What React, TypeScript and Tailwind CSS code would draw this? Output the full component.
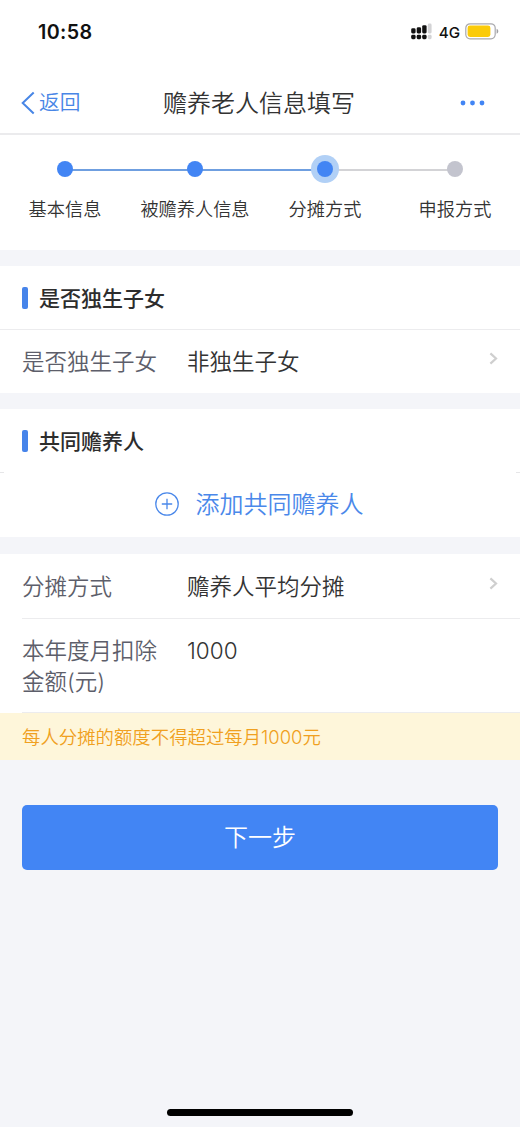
import React from 'react';

interface Step {
  label: string;
  status: 'done' | 'current' | 'todo';
}

const steps: Step[] = [
  { label: '基本信息', status: 'done' },
  { label: '被赡养人信息', status: 'done' },
  { label: '分摊方式', status: 'current' },
  { label: '申报方式', status: 'todo' },
];

const StatusBar: React.FC = () => (
  <div className="flex h-[62px] items-center justify-between pl-[38px] pr-[21px]">
    <span className="pt-[3px] text-[19.7px] font-semibold leading-none tracking-[0.4px] text-[#111]">
      10:58
    </span>
    <div className="flex items-center pt-px">
      <svg width="21" height="17" viewBox="0 0 21 17" fill="#111">
        <rect x="0.2" y="5.3" width="4.4" height="5.2" rx="1.4" />
        <rect x="5.7" y="4.3" width="4.4" height="6.2" rx="1.4" />
        <rect x="11.2" y="2.2" width="4.4" height="8.3" rx="1.4" />
        <rect x="16.8" y="0.5" width="3.8" height="10" rx="1.4" fill="#d3d3d5" />
        <rect x="0.2" y="11.8" width="4.4" height="4.4" rx="1.4" />
        <rect x="5.7" y="11.8" width="4.4" height="4.4" rx="1.4" />
        <rect x="11.2" y="11.8" width="4.4" height="4.4" rx="1.4" />
        <rect x="16.8" y="11.8" width="3.8" height="4.4" rx="1.4" fill="#d3d3d5" />
      </svg>
      <span className="ml-[7px] pt-0.5 text-[15.2px] font-medium leading-none text-[#111]">4G</span>
      <svg className="ml-[5px]" width="34" height="17" viewBox="0 0 34 17">
        <rect x="0.8" y="0.8" width="29.4" height="15" rx="4.2" fill="#fff" stroke="#a9a9ad" strokeWidth="1.2" />
        <rect x="2.6" y="2.6" width="22.8" height="11.4" rx="2.4" fill="#fbcb0a" />
        <path d="M31.6 5.8v5c1.2-.5 1.7-1.4 1.7-2.5s-.5-2-1.7-2.5z" fill="#a0a0a4" />
      </svg>
    </div>
  </div>
);

const NavBar: React.FC = () => (
  <div className="grid h-[73px] grid-cols-[1fr_auto_1fr] items-center border-b-2 border-[#ebebed] pl-[21px] pr-[23px] pt-[10px]">
    <button className="flex items-center text-[#4886e6]">
      <svg width="14" height="24" viewBox="0 0 14 24" fill="none" stroke="currentColor" strokeWidth="2">
        <path d="M12.7 1.5L1.7 12l11 10.5" />
      </svg>
      <span className="ml-1 pt-[2px] text-[20.7px] leading-none">返回</span>
    </button>
    <h1 className="pt-[3px] text-2xl leading-none">赡养老人信息填写</h1>
    <svg className="mr-3 justify-self-end" width="25" height="6" viewBox="0 0 25 6" fill="#4285f4">
      <circle cx="3" cy="3" r="2.4" />
      <circle cx="12.5" cy="3" r="2.4" />
      <circle cx="22" cy="3" r="2.4" />
    </svg>
  </div>
);

// Dots with the connecting line drawn from the previous step
const Stepper: React.FC = () => (
  <div className="grid h-[115px] grid-cols-4 pt-[19px]">
    {steps.map((step, i) => (
      <div key={step.label} className="relative flex flex-col items-center">
        {i > 0 && (
          <div
            className={`absolute right-1/2 top-[15px] h-[2px] w-full ${
              step.status === 'todo' ? 'bg-[#d3d3d6]' : 'bg-[#6f9fe0]'
            }`}
          />
        )}
        <div className="z-10 flex h-[30px] items-center">
          {step.status === 'current' ? (
            <div className="flex size-7 items-center justify-center rounded-full bg-[#b1d0f6]">
              <div className="size-[16.5px] rounded-full bg-[#4285f4]" />
            </div>
          ) : (
            <div
              className={`size-[16.5px] rounded-full ${step.status === 'done' ? 'bg-[#4285f4]' : 'bg-[#c3c4ce]'}`}
            />
          )}
        </div>
        <span className="mt-4 whitespace-nowrap text-[18.2px] leading-[18px]">{step.label}</span>
      </div>
    ))}
  </div>
);

const SectionTitle: React.FC<{ title: string }> = ({ title }) => (
  <div className="flex h-[63px] items-center px-[22px]">
    <div className="h-[22px] w-[6px] rounded-[2px] bg-[#4684ea]" />
    <h2 className="ml-[11px] pt-[2px] text-[21px] font-medium leading-none text-[#2d2d2d]">{title}</h2>
  </div>
);

const Chevron: React.FC = () => (
  <svg className="mb-2 ml-auto" width="9" height="13" viewBox="0 0 9 13" fill="none" stroke="#cfcfcf" strokeWidth="2.2">
    <path d="M1.4 1.4L7 6.5l-5.6 5.1" />
  </svg>
);

const SelectRow: React.FC<{ label: string; value: string }> = ({ label, value }) => (
  <button className="flex h-[63px] w-full items-center px-[22px] pt-[2px] text-[22.5px] leading-none">
    <span className="w-[165px] text-left text-[#5d5e6a]">{label}</span>
    <span>{value}</span>
    <Chevron />
  </button>
);

const App: React.FC = () => {
  return (
    <div className="flex min-h-[1127px] w-[520px] flex-col bg-[#f4f5f9] font-['Inter','Noto_Sans_CJK_SC',sans-serif] font-[350] text-[#333]">
      <header className="bg-white">
        <StatusBar />
        <NavBar />
        <Stepper />
      </header>

      <section className="mt-4 bg-white">
        <SectionTitle title="是否独生子女" />
        <div className="border-t border-[#ececee]">
          <SelectRow label="是否独生子女" value="非独生子女" />
        </div>
      </section>

      <section className="mt-4 bg-white">
        <SectionTitle title="共同赡养人" />
        {/* the divider only shows at the two edges */}
        <div className="flex h-px justify-between">
          <div className="w-1 bg-[#e6e6e8]" />
          <div className="w-1 bg-[#e6e6e8]" />
        </div>
        <button className="flex h-16 w-full items-center justify-center pb-[3px] pr-[2px] text-2xl leading-none text-[#4a88ea]">
          <svg className="mr-[17px]" width="24" height="24" viewBox="0 0 24 24" fill="none" stroke="currentColor" strokeWidth="1.3">
            <circle cx="12" cy="12" r="11.2" />
            <path d="M6.8 12h10.4M12 6.8v10.4" />
          </svg>
          <span className="pt-[2px]">添加共同赡养人</span>
        </button>
      </section>

      <section className="mt-[17px] bg-white pt-px">
        <SelectRow label="分摊方式" value="赡养人平均分摊" />
        <div className="ml-[22px] flex h-[95px] border-y border-[#ececee] pt-4 text-[22.5px] leading-[31px]">
          <span className="w-[165px] pr-[25px] text-[#5d5e6a]">本年度月扣除金额(元)</span>
          <span className="text-[22.5px]">1000</span>
        </div>
      </section>
      <p className="flex h-[47px] items-center bg-[#fef6da] px-[22px] pt-px text-[18.4px] leading-none text-[#f0a020]">
        每人分摊的额度不得超过每月1000元
      </p>

      <div className="px-[22px] pt-[45px]">
        <button className="h-[65px] w-full rounded-[5px] bg-[#4285f4] text-2xl leading-none text-white">下一步</button>
      </div>

      <div className="mx-auto mb-[11px] mt-auto h-[7px] w-[186px] rounded-full bg-black" />
    </div>
  );
};

export default App;
